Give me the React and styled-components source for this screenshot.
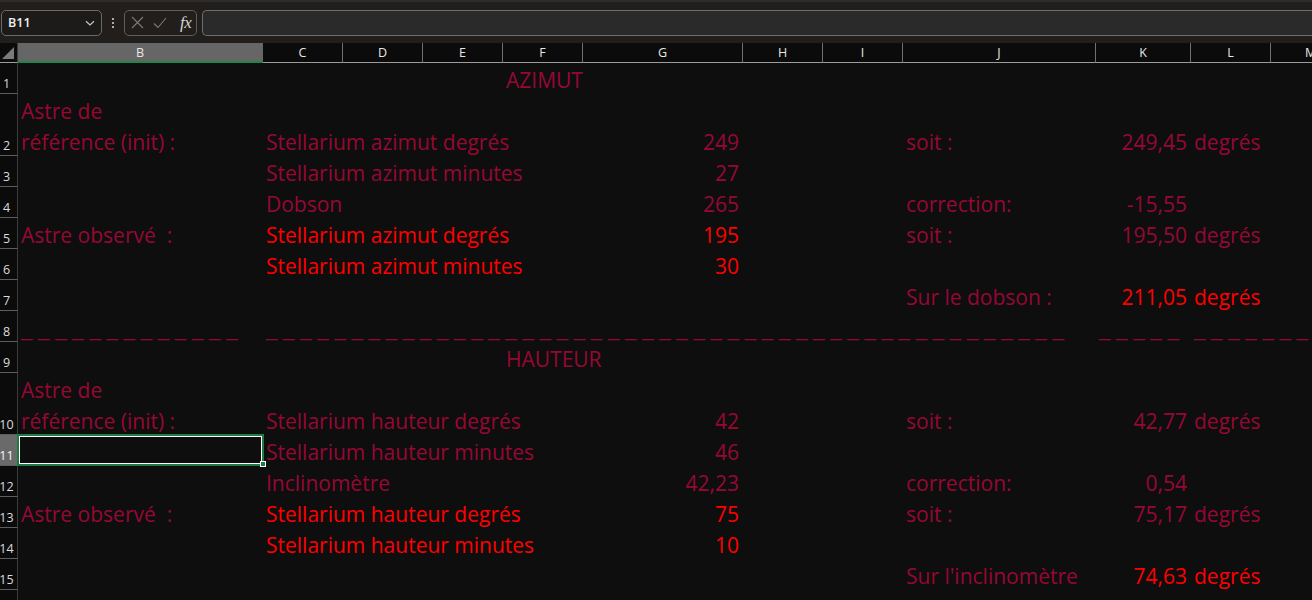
import React from "react";
import styled, { createGlobalStyle } from "styled-components";

const GlobalStyle = createGlobalStyle`
  html, body { margin: 0; padding: 0; background: #0e0e0e; overflow: hidden; }
  body { width: 1312px; height: 600px; }
  * { box-sizing: border-box; }
`;

const DARK = "#960834";
const RED = "#ff0000";

const COLS = ["B", "C", "D", "E", "F", "G", "H", "I", "J", "K", "L", "M"];
const WIDTHS = [245, 80, 80, 80, 80, 160, 80, 80, 193, 95, 80, 80];
const TEMPLATE = `18px ${WIDTHS.map((w) => w + "px").join(" ")}`;

const dashes = (n) => Array(n).fill("_").join(" ");

const ROWS = [
  { n: 1, h: 31, cells: { F: { t: "AZIMUT" } } },
  {
    n: 2,
    h: 62,
    cells: {
      B: { t: "Astre de\nréférence (init)  :", wrap: true },
      C: { t: "Stellarium azimut degrés" },
      G: { t: "249", r: true },
      J: { t: "soit :" },
      K: { t: "249,45", r: true },
      L: { t: "degrés" },
    },
  },
  { n: 3, h: 31, cells: { C: { t: "Stellarium azimut minutes" }, G: { t: "27", r: true } } },
  {
    n: 4,
    h: 31,
    cells: {
      C: { t: "Dobson" },
      G: { t: "265", r: true },
      J: { t: "correction:" },
      K: { t: "-15,55", r: true },
    },
  },
  {
    n: 5,
    h: 31,
    cells: {
      B: { t: "Astre observé  :" },
      C: { t: "Stellarium azimut degrés", red: true },
      G: { t: "195", r: true, red: true },
      J: { t: "soit :" },
      K: { t: "195,50", r: true },
      L: { t: "degrés" },
    },
  },
  {
    n: 6,
    h: 31,
    cells: {
      C: { t: "Stellarium azimut minutes", red: true },
      G: { t: "30", r: true, red: true },
    },
  },
  {
    n: 7,
    h: 31,
    cells: {
      J: { t: "Sur le dobson :" },
      K: { t: "211,05", r: true, red: true },
      L: { t: "degrés", red: true },
    },
  },
  {
    n: 8,
    h: 31,
    cells: {
      B: { t: dashes(13), dash: true },
      C: { t: dashes(47), dash: true },
      K: { t: dashes(5), dash: true },
      L: { t: dashes(10), dash: true },
    },
  },
  { n: 9, h: 31, cells: { F: { t: "HAUTEUR" } } },
  {
    n: 10,
    h: 62,
    cells: {
      B: { t: "Astre de\nréférence (init) :", wrap: true },
      C: { t: "Stellarium hauteur degrés" },
      G: { t: "42", r: true },
      J: { t: "soit :" },
      K: { t: "42,77", r: true },
      L: { t: "degrés" },
    },
  },
  {
    n: 11,
    h: 31,
    selected: true,
    cells: { C: { t: "Stellarium hauteur minutes" }, G: { t: "46", r: true } },
  },
  {
    n: 12,
    h: 31,
    cells: {
      C: { t: "Inclinomètre" },
      G: { t: "42,23", r: true },
      J: { t: "correction:" },
      K: { t: "0,54", r: true },
    },
  },
  {
    n: 13,
    h: 31,
    cells: {
      B: { t: "Astre observé  :" },
      C: { t: "Stellarium hauteur degrés", red: true },
      G: { t: "75", r: true, red: true },
      J: { t: "soit :" },
      K: { t: "75,17", r: true },
      L: { t: "degrés" },
    },
  },
  {
    n: 14,
    h: 31,
    cells: {
      C: { t: "Stellarium hauteur minutes", red: true },
      G: { t: "10", r: true, red: true },
    },
  },
  {
    n: 15,
    h: 31,
    cells: {
      J: { t: "Sur l'inclinomètre" },
      K: { t: "74,63", r: true, red: true },
      L: { t: "degrés", red: true },
    },
  },
  { n: 16, h: 31, cells: {} },
];

/* ---------- formula bar ---------- */
const TopBar = styled.div`
  height: 43px;
  background: #211e1b;
  border-top: 2px solid #2c2c2c;
  display: flex;
  align-items: center;
  padding-left: 1px;
`;

const NameBox = styled.div`
  width: 101px;
  height: 26px;
  border: 1px solid #6a6a6a;
  border-radius: 5px;
  background: #1d1b19;
  display: flex;
  align-items: center;
  justify-content: space-between;
  padding: 0 5px 0 6px;
  font-family: "Open Sans", sans-serif;
  font-size: 12.5px;
  font-weight: 600;
  color: #f0f0f0;
`;

const MoreDots = styled.div`
  width: 22px;
  display: flex;
  justify-content: center;
  color: #c8c8c8;
`;

const FuncBox = styled.div`
  width: 73px;
  height: 26px;
  border: 1px solid #5e5e5e;
  border-radius: 5px;
  display: flex;
  align-items: center;
  padding-left: 6px;
  gap: 9px;
`;

const FxLabel = styled.span`
  font-family: "Liberation Serif", serif;
  font-style: italic;
  font-size: 17px;
  color: #d4d4d4;
  margin-left: 4px;
  letter-spacing: -0.5px;
`;

const FormulaInput = styled.div`
  flex: 1;
  height: 26px;
  margin-left: 5px;
  border: 1px solid #6e6e6e;
  border-right: none;
  border-radius: 5px 0 0 5px;
  background: #2a2a2a;
`;

/* ---------- sheet ---------- */
const Sheet = styled.div`
  background: #0e0e0e;
  width: 1371px;
`;

const Row = styled.div`
  display: grid;
  grid-template-columns: ${TEMPLATE};
  height: ${(p) => p.$h}px;
`;

const HeaderRow = styled(Row)`
  background: #0b0b0b;
`;

const Corner = styled.div`
  border-bottom: 1px solid #9c9c9c;
  border-right: 1px solid #3c3c3c;
  display: flex;
  align-items: flex-end;
  justify-content: flex-end;
  padding: 0 3px 3px 0;
`;

const ColHead = styled.div`
  display: flex;
  align-items: center;
  justify-content: center;
  font-family: "Open Sans", sans-serif;
  font-size: 12.5px;
  color: #e6e6e6;
  background: ${(p) => (p.$sel ? "#666666" : "#0b0b0b")};
  border-right: 1px solid ${(p) => (p.$sel ? "#666666" : "#707070")};
  border-bottom: ${(p) => (p.$sel ? "2px solid #23834c" : "1px solid #9c9c9c")};
  padding-top: ${(p) => (p.$sel ? "1px" : "0")};
`;

const RowHead = styled.div`
  display: flex;
  align-items: flex-end;
  justify-content: center;
  padding: 0 4px 1px 0;
  font-family: "Open Sans", sans-serif;
  font-size: 12.5px;
  line-height: 16px;
  color: ${(p) => (p.$sel ? "#f4f4f4" : "#dcdcdc")};
  background: ${(p) => (p.$sel ? "#6a6a6a" : "#0b0b0b")};
  border-bottom: 1px solid #5e5e5e;
  border-right: 1px solid #3c3c3c;
  overflow: hidden;
`;

const Cell = styled.div`
  position: relative;
  display: flex;
  align-items: flex-end;
  justify-content: ${(p) => (p.$right ? "flex-end" : "flex-start")};
  padding: 0 4px 0 3px;
  font-family: ${(p) =>
    p.$dash ? '"Liberation Sans", sans-serif' : '"Open Sans", sans-serif'};
  font-size: ${(p) => (p.$dash ? "20.5px" : "21px")};
  line-height: 31px;
  white-space: ${(p) => (p.$wrap ? "pre-line" : "pre")};
  color: ${(p) => (p.$red ? RED : DARK)};
  min-width: 0;
`;

const CellText = styled.span`
  display: block;
  flex: none;
  margin-bottom: -2px;
`;

const Selection = styled.div`
  position: absolute;
  top: -1px;
  left: -1px;
  right: -1px;
  bottom: 0;
  border: 2px solid #1f7a45;
  box-shadow: inset 0 0 0 1px #ffffff;
  pointer-events: none;
`;

const FillHandle = styled.div`
  position: absolute;
  right: -4px;
  bottom: -3px;
  width: 6px;
  height: 6px;
  background: #1f7a45;
  border: 1px solid #ffffff;
`;

const Chevron = () => (
  <svg width="12" height="12" viewBox="0 0 12 12" fill="none">
    <path d="M2 4.2 L6 8 L10 4.2" stroke="#c8c8c8" strokeWidth="1.2" />
  </svg>
);

const Dots = () => (
  <svg width="4" height="12" viewBox="0 0 4 12">
    <circle cx="2" cy="2" r="1.1" fill="#cfcfcf" />
    <circle cx="2" cy="6" r="1.1" fill="#cfcfcf" />
    <circle cx="2" cy="10" r="1.1" fill="#cfcfcf" />
  </svg>
);

const CancelIcon = () => (
  <svg width="13" height="13" viewBox="0 0 13 13" fill="none">
    <path d="M1 1 L12 12 M12 1 L1 12" stroke="#7c7c7c" strokeWidth="1.1" />
  </svg>
);

const CheckIcon = () => (
  <svg width="14" height="12" viewBox="0 0 14 12" fill="none">
    <path d="M1 6.5 L5 10.5 L13 1" stroke="#7c7c7c" strokeWidth="1.1" />
  </svg>
);

const CornerTriangle = () => (
  <svg width="12" height="12" viewBox="0 0 12 12">
    <path d="M12 0 L12 12 L0 12 Z" fill="#7a7a7a" />
  </svg>
);

export default function App() {
  return (
    <>
      <GlobalStyle />
      <TopBar>
        <NameBox>
          <span>B11</span>
          <Chevron />
        </NameBox>
        <MoreDots>
          <Dots />
        </MoreDots>
        <FuncBox>
          <CancelIcon />
          <CheckIcon />
          <FxLabel>fx</FxLabel>
        </FuncBox>
        <FormulaInput />
      </TopBar>
      <Sheet>
        <HeaderRow $h={20}>
          <Corner>
            <CornerTriangle />
          </Corner>
          {COLS.map((c) => (
            <ColHead key={c} $sel={c === "B"}>
              {c}
            </ColHead>
          ))}
        </HeaderRow>
        {ROWS.map((row) => (
          <Row key={row.n} $h={row.h}>
            <RowHead $sel={row.selected}>{row.n}</RowHead>
            {COLS.map((c) => {
              const cell = row.cells[c];
              return (
                <Cell
                  key={c}
                  $right={cell && cell.r}
                  $red={cell && cell.red}
                  $wrap={cell && cell.wrap}
                  $dash={cell && cell.dash}
                >
                  {cell && <CellText>{cell.t}</CellText>}
                  {row.selected && c === "B" && (
                    <Selection>
                      <FillHandle />
                    </Selection>
                  )}
                </Cell>
              );
            })}
          </Row>
        ))}
      </Sheet>
    </>
  );
}
